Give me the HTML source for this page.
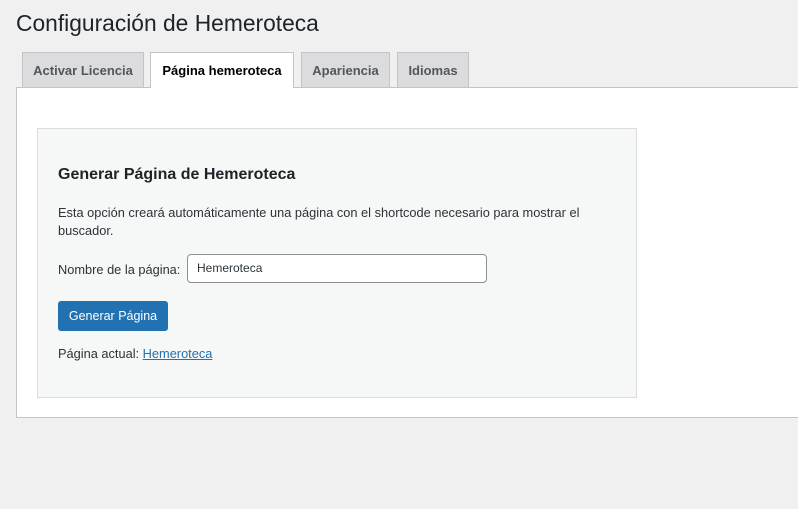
<!DOCTYPE html>
<html><head><meta charset="utf-8"><style>
body{margin:0;width:798px;height:509px;background:#f0f0f1;font-family:"Liberation Sans",sans-serif;color:#1d2327;position:relative;overflow:hidden}
.a{position:absolute;white-space:nowrap}
h1{position:absolute;left:16px;top:10px;margin:0;font-size:22.8px;font-weight:400;color:#1d2327}
.tab{position:absolute;top:52px;height:35px;border:1px solid #c3c4c7;background:#dcdcde;font-size:13px;font-weight:bold;color:#50575e;box-sizing:border-box;text-align:center;line-height:35px;border-bottom:none}
.act{color:#000;height:36px;z-index:2;background:#fff}
.panel{position:absolute;left:16px;top:87px;width:800px;height:331px;background:#fff;border:1px solid #c3c4c7;box-sizing:border-box}
.box{position:absolute;left:37px;top:128px;width:600px;height:270px;background:#f6f7f7;border:1px solid #dcdcde;box-sizing:border-box}
.t{font-size:12.8px;color:#2c3338}
</style></head><body>
<h1>Configuración de Hemeroteca</h1>
<div class="tab" style="left:22px;width:122px">Activar Licencia</div>
<div class="tab act" style="left:150px;width:144px">Página hemeroteca</div>
<div class="tab" style="left:301px;width:89px">Apariencia</div>
<div class="tab" style="left:397px;width:72px">Idiomas</div>
<div class="panel"></div>
<div class="box"></div>
<div class="a" style="left:58px;top:166px;font-size:16px;font-weight:bold;color:#1d2327">Generar Página de Hemeroteca</div>
<div class="a t" style="left:58px;top:204px;line-height:18px">Esta opción creará automáticamente una página con el shortcode necesario para mostrar el<br>buscador.</div>
<div class="a t" style="left:58px;top:262px">Nombre de la página:</div>
<div class="a" style="left:187px;top:254px;width:300px;height:29px;box-sizing:border-box;border:1px solid #8c8f94;border-radius:4px;background:#fff;font-size:12px;padding-left:9px;line-height:27px;color:#2c3338">Hemeroteca</div>
<div class="a" style="left:58px;top:301px;width:110px;height:30px;background:#2271b1;border-radius:3px;color:#fff;font-size:12.5px;text-align:center;line-height:30px">Generar Página</div>
<div class="a t" style="left:58px;top:346px">Página actual: <span style="color:#2271b1;text-decoration:underline">Hemeroteca</span></div>
</body></html>
